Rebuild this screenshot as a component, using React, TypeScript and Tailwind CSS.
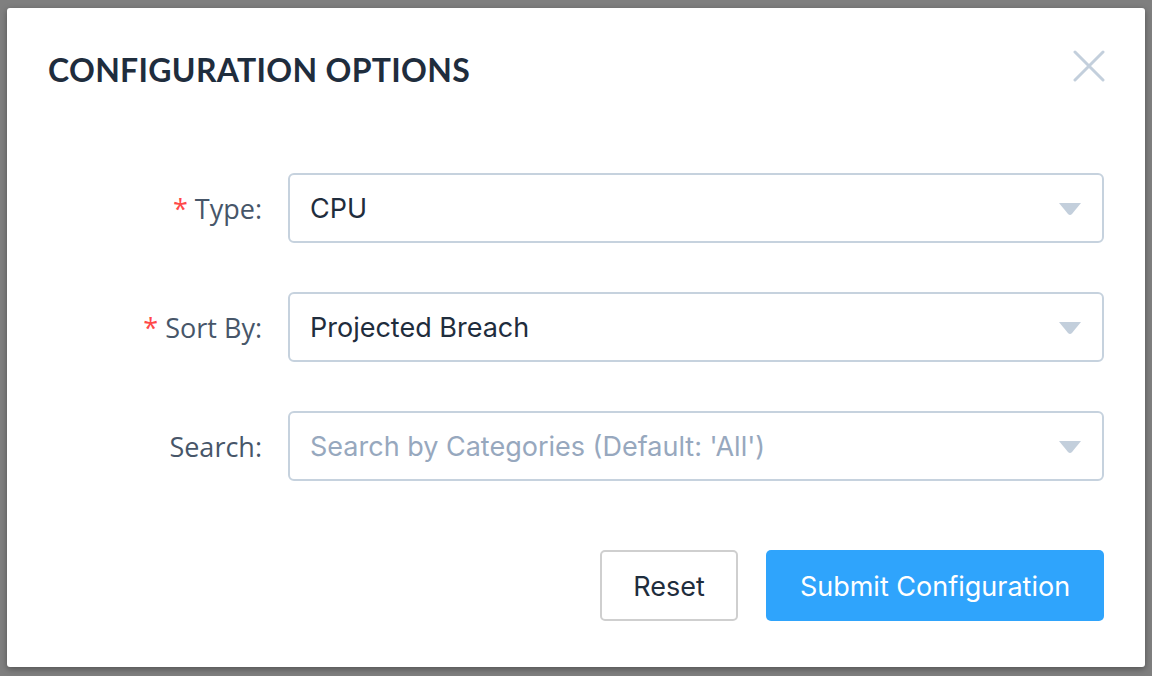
const fields = [
  { label: 'Type:', required: true, value: 'CPU', placeholder: false },
  { label: 'Sort By:', required: true, value: 'Projected Breach', placeholder: false },
  { label: 'Search:', required: false, value: "Search by Categories (Default: 'All')", placeholder: true },
];

export default function App() {
  return (
    <div className="h-[676px] w-[1152px] bg-[#7f7f7f] pl-[7px] pt-[8px]">
      <div className="flex h-[659px] w-[1138px] flex-col rounded-[3px] bg-white px-[41px] shadow-[0_2px_6px_rgba(0,0,0,0.35)]">
        <div className="flex h-[124px] items-start justify-between pt-[40px]">
          <h1 className="text-[32px] leading-[44px] font-bold tracking-[0.3px] text-[#1f2d3d] [font-family:Lato,'Noto_Sans',sans-serif]">
            CONFIGURATION OPTIONS
          </h1>
          <button className="mt-[2px] -mr-[1px]">
            <svg width="32" height="32" viewBox="0 0 32 32">
              <path d="M2 2 L30 30 M30 2 L2 30" stroke="#c3cfdc" strokeWidth="3" strokeLinecap="round" />
            </svg>
          </button>
        </div>

        <div className="mt-[41px] flex flex-col gap-[49px] [font-family:Inter,sans-serif]">
          {fields.map((f) => (
            <div key={f.label} className="flex items-center gap-[26px]">
              <label className="w-[214px] pt-[2px] text-right text-[27px] text-[#475669] [font-family:'Open_Sans',sans-serif]">
                {f.required && <span className="mr-[7px] text-[#ff4949]">*</span>}
                {f.label}
              </label>
              <div className="flex h-[70px] flex-1 items-center justify-between rounded-[6px] border-2 border-[#c6d2de] pl-[20px] pr-[20px]">
                <span className={`pt-[3px] text-[27px] ${f.placeholder ? 'text-[#97a8be]' : 'text-[#1f2d3d]'}`}>{f.value}</span>
                <svg width="24" height="14" viewBox="0 0 24 14" className="mt-[2px]">
                  <path d="M1 1 H23 L14 12 Q12 14 10 12 Z" fill="#c3cfdc" />
                </svg>
              </div>
            </div>
          ))}
        </div>

        <div className="mt-[69px] flex justify-end gap-[28px] [font-family:Inter,sans-serif]">
          <button className="h-[71px] w-[138px] rounded-[5px] border-2 border-[#cfcfcf] bg-white pt-[3px] text-[27px] text-[#1f2d3d]">
            Reset
          </button>
          <button className="h-[71px] w-[338px] rounded-[5px] bg-[#2fa4fc] pt-[3px] text-[27px] text-white">
            Submit Configuration
          </button>
        </div>
      </div>
    </div>
  );
}
